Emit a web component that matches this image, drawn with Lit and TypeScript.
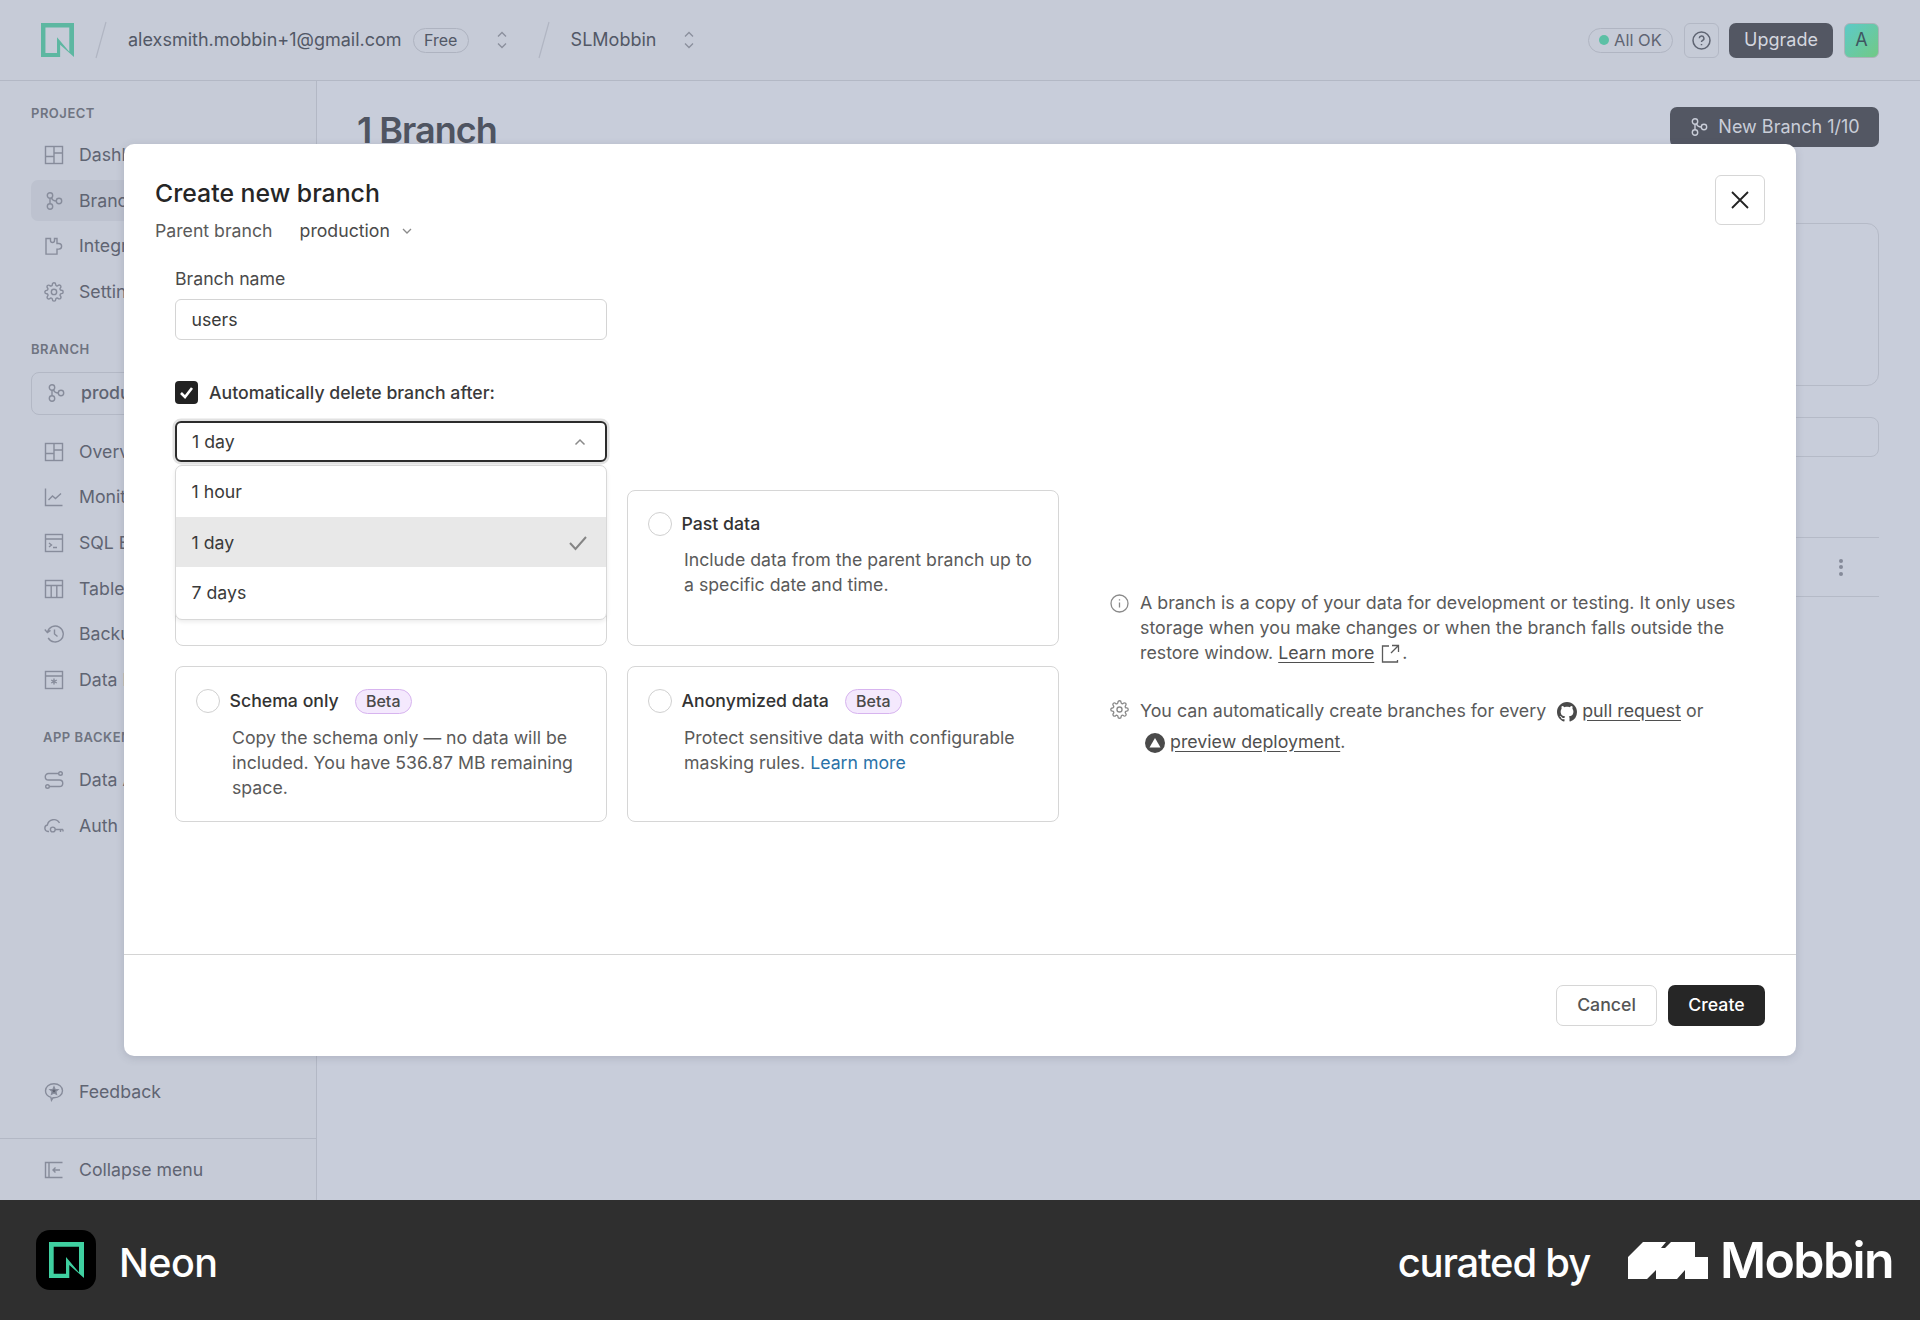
import { css, html, LitElement, svg } from "lit";
import { customElement } from "lit/decorators.js";

const GEAR = "M19.4 15a1.65 1.65 0 0 0 .33 1.82l.06.06a2 2 0 0 1 0 2.83 2 2 0 0 1-2.83 0l-.06-.06a1.65 1.65 0 0 0-1.82-.33 1.65 1.65 0 0 0-1 1.51V21a2 2 0 0 1-2 2 2 2 0 0 1-2-2v-.09A1.65 1.65 0 0 0 9 19.4a1.65 1.65 0 0 0-1.82.33l-.06.06a2 2 0 0 1-2.83 0 2 2 0 0 1 0-2.83l.06-.06a1.65 1.65 0 0 0 .33-1.82 1.65 1.65 0 0 0-1.51-1H3a2 2 0 0 1-2-2 2 2 0 0 1 2-2h.09A1.65 1.65 0 0 0 4.6 9a1.65 1.65 0 0 0-.33-1.82l-.06-.06a2 2 0 0 1 0-2.83 2 2 0 0 1 2.83 0l.06.06a1.65 1.65 0 0 0 1.82.33H9a1.65 1.65 0 0 0 1-1.51V3a2 2 0 0 1 2-2 2 2 0 0 1 2 2v.09a1.65 1.65 0 0 0 1 1.51 1.65 1.65 0 0 0 1.82-.33l.06-.06a2 2 0 0 1 2.83 0 2 2 0 0 1 0 2.83l-.06.06a1.65 1.65 0 0 0-.33 1.82V9a1.65 1.65 0 0 0 1.51 1H21a2 2 0 0 1 2 2 2 2 0 0 1-2 2h-.09a1.65 1.65 0 0 0-1.51 1z";
const GITHUB = "M8 0C3.58 0 0 3.58 0 8c0 3.54 2.29 6.53 5.47 7.59.4.07.55-.17.55-.38 0-.19-.01-.82-.01-1.49-2.01.37-2.53-.49-2.69-.94-.09-.23-.48-.94-.82-1.13-.28-.15-.68-.52-.01-.53.63-.01 1.08.58 1.23.82.72 1.21 1.87.87 2.33.66.07-.52.28-.87.51-1.07-1.78-.2-3.64-.89-3.64-3.95 0-.87.31-1.59.82-2.15-.08-.2-.36-1.02.08-2.12 0 0 .67-.21 2.2.82.64-.18 1.32-.27 2-.27.68 0 1.36.09 2 .27 1.53-1.04 2.2-.82 2.2-.82.44 1.1.16 1.92.08 2.12.51.56.82 1.27.82 2.15 0 3.07-1.87 3.75-3.65 3.95.29.25.54.73.54 1.48 0 1.07-.01 1.93-.01 2.2 0 .21.15.46.55.38A8.013 8.013 0 0016 8c0-4.42-3.58-8-8-8z";

const icons: Record<string, unknown> = {
  dashboard: svg`<rect x="1.5" y="1.5" width="17" height="17"/><path d="M10 1.5v17M1.5 11.5H10M10 8h8.5"/>`,
  branch: svg`<circle cx="6" cy="4.5" r="2.7"/><circle cx="6" cy="15.5" r="2.7"/><circle cx="15" cy="10" r="2.7"/><path d="M6 7.2v5.6M7.5 7c.8 2.2 2.6 3 4.8 3"/>`,
  puzzle: svg`<path d="M2 2.5h4.5v2a2 2 0 0 0 4 0v-2H13v5h1.8a2.8 2.8 0 0 1 0 5.6H13v5H2z"/>`,
  gear: svg`<g transform="scale(.8333)" stroke-width="1.7"><path d="${GEAR}"/><circle cx="12" cy="12" r="3.2"/></g>`,
  chart: svg`<path d="M1.5 1.5v17h17M4.5 13l4-4 3 2.5 5.5-5"/>`,
  sql: svg`<rect x="1.5" y="1.5" width="17" height="17"/><path d="M1.5 6h17M5 10l2.5 2L5 14M9 14.5h4"/>`,
  tables: svg`<rect x="1.5" y="1.5" width="17" height="17"/><path d="M1.5 6.5h17M7.2 6.5v12M12.8 6.5v12"/>`,
  backup: svg`<path d="M3.5 8a8 8 0 1 1 .7 5.8M.8 5.5 3.4 8.6l3.1-2.2M10.5 5.5V10l3 2.5"/>`,
  mask: svg`<rect x="1.5" y="1.5" width="17" height="17"/><path d="M1.5 6h17M10 8.5v6M7.2 10l5.6 3M12.8 10l-5.6 3"/>`,
  flow: svg`<circle cx="16.5" cy="3.5" r="1.8"/><circle cx="3.5" cy="16.5" r="1.8"/><path d="M14.7 3.5H4.5a3 3 0 0 0 0 6.5h11a3 3 0 0 1 0 6.5H5.3"/>`,
  auth: svg`<path d="M5 15.5H4A3.3 3.3 0 0 1 3.4 9 6.5 6.5 0 0 1 15.5 7"/><circle cx="8.8" cy="13.5" r="2.4"/><path d="M11.2 13.5H19M16.5 13.5v2.5M19 13.5v2"/>`,
  feedback: svg`<path d="M10 1.8c4.8 0 8.5 3 8.5 7s-3.7 7-8.5 7H9l-1.5 2.4-.6-2.9C3.6 14.3 1.5 11.8 1.5 8.8c0-4 3.7-7 8.5-7z"/><path d="m10 5 1.1 2.5 2.7.2-2 1.8.6 2.7-2.4-1.4-2.4 1.4.6-2.7-2-1.8 2.7-.2z" fill="currentColor"/>`,
  collapse: svg`<path d="M18.5 2.5H1.5v15h17M5 2.5v15M16 10H9M11.5 7.5 9 10l2.5 2.5"/>`,
};

const icon = (name: string, size = 20) => html`<svg class="ico" width=${size} height=${size} viewBox="0 0 20 20">${icons[name]}</svg>`;

const updown = html`<svg class="updown" width="12" height="20" viewBox="0 0 12 20"><path d="M2 6.5 6 2.5l4 4M2 13.5l4 4 4-4"/></svg>`;
const slash = html`<svg class="slash" width="12" height="38" viewBox="0 0 12 38"><path d="M11 1 1 37"/></svg>`;

const neonMark = svg`<path fill-rule="evenodd" d="M0 0H35V36L20.3 23V36H0ZM4.7 4.7V31.7H17V15L30 30.5V4.7Z"/>`;

@customElement("app-root")
export class AppRoot extends LitElement {
  static override styles = css`
    :host {
      display: block;
      width: 1920px;
      font-family: Inter, "Liberation Sans", sans-serif;
      font-size: 17.7px;
      line-height: 24px;
    }
    * { box-sizing: border-box; }
    a { color: inherit; }

    .screen { position: relative; height: 1200px; background: #c8cdda; display: flex; flex-direction: column; overflow: hidden; }

    /* top bar */
    .topbar { height: 81px; flex: none; background: #c6cbd7; border-bottom: 1px solid #b3b8c5; display: flex; align-items: center; padding: 0 41px; color: #525866; font-size: 18px; }
    .topbar .logo { width: 33px; height: 34px; color: #5db7a1; margin-right: 21px; flex: none; }
    .slash { flex: none; }
    .slash path { fill: none; stroke: #b0b5c2; stroke-width: 1.2; }
    .updown { flex: none; }
    .updown path { fill: none; stroke: #8a8f9c; stroke-width: 1.3; }
    .email { margin-left: 21px; }
    .free { margin-left: 11px; height: 25px; width: 56px; border: 1px solid #aeb3c0; border-radius: 13px; font-size: 16px; display: flex; align-items: center; justify-content: center; }
    .acct-switch { margin: 0 30px 0 27px; display: flex; }
    .org { margin-left: 21px; }
    .org-switch { margin-left: 27px; display: flex; }
    .topbar-right { margin-left: auto; display: flex; align-items: center; }
    .status { height: 25px; width: 85px; border: 1px solid #b0b5c2; border-radius: 13px; font-size: 16.5px; display: flex; align-items: center; padding-left: 10px; gap: 5px; color: #5f6472; white-space: nowrap; }
    .status i { width: 10px; height: 10px; border-radius: 50%; background: #5cc0a5; flex: none; }
    .help { margin-left: 11px; width: 35px; height: 35px; border: 1px solid #b3b8c5; border-radius: 6px; display: flex; align-items: center; justify-content: center; color: #5f6472; }
    .upgrade { margin-left: 10px; width: 104px; height: 35px; border-radius: 7px; background: #535763; color: #d3d6df; display: flex; align-items: center; justify-content: center; }
    .avatar { margin-left: 11px; width: 35px; height: 35px; border-radius: 6px; background: linear-gradient(135deg, #5ccac8, #72c985); border: 1px solid #a9b3b8; color: #3f5560; display: flex; align-items: center; justify-content: center; }

    .body { flex: 1; display: flex; min-height: 0; }

    /* sidebar */
    .side { width: 317px; flex: none; background: #c6cbd7; border-right: 1px solid #b3b8c5; padding: 24px 0 9.5px; display: flex; flex-direction: column; color: #5f6472; }
    .sec { font-size: 13px; line-height: 16px; font-weight: 600; letter-spacing: .5px; color: #6f7481; margin-left: 31px; }
    .sec.b { margin-top: 28.5px; }
    .sec.c { margin-top: 28.5px; margin-left: 43px; }
    .nav { display: flex; flex-direction: column; gap: 4.6px; margin: 13.5px 0 0 31px; width: 255px; }
    .nav.o { margin-top: 16.5px; }
    .nav.d { margin-top: 15px; }
    .item { height: 41px; border-radius: 7px; display: flex; align-items: center; padding-left: 13px; gap: 15px; white-space: nowrap; }
    .item.on { background: #bdc2cf; }
    .ico { flex: none; fill: none; stroke: #878c9b; stroke-width: 1.4; }
    .prod { margin: 15px 0 0 31px; width: 255px; height: 43px; border: 1px solid #b3b8c5; border-radius: 8px; display: flex; align-items: center; padding-left: 14px; gap: 15px; font-weight: 500; }
    .side-end { margin-top: auto; }
    .side-end .nav { margin-top: 0; }
    .side-end .rule { height: 1px; background: #b3b8c5; margin: 25.5px 0 11px; }

    /* page behind the dialog */
    .main { flex: 1; padding: 26px 41px 0 40px; }
    .main-head { display: flex; justify-content: space-between; align-items: flex-start; }
    .main-head h1 { margin: 1px 0 0; font-size: 36px; line-height: 44px; font-weight: 600; letter-spacing: -1px; color: #4f5461; }
    .new { width: 209px; height: 40px; border-radius: 7px; background: #535763; color: #c9cdd8; display: flex; align-items: center; justify-content: center; gap: 9px; white-space: nowrap; font-size: 18px; }
    .new .ico { stroke: #c9cdd8; }
    .ghost { border: 1px solid #b5bac7; border-radius: 12px; }
    .ghost.a { height: 163px; margin-top: 71px; }
    .ghost.s { height: 40px; margin-top: 31px; border-radius: 8px; }
    .rowline { height: 60px; margin-top: 80px; border-top: 1px solid #b5bac7; border-bottom: 1px solid #b5bac7; display: flex; align-items: center; justify-content: flex-end; padding-right: 36px; }
    .dots { display: flex; flex-direction: column; gap: 2.5px; }
    .dots i { width: 4px; height: 4px; border-radius: 50%; background: #858a99; }

    /* dialog */
    .modal { position: absolute; left: 124px; top: 144px; width: 1672px; height: 912px; background: #fff; border-radius: 10px; box-shadow: 0 2px 8px rgba(60, 66, 90, .18); display: flex; flex-direction: column; color: #5a5a5a; }
    .m-main { flex: 1; padding: 31px 31px 0; }
    .m-head { display: flex; justify-content: space-between; align-items: flex-start; }
    .m-head h2 { margin: 2px 0 10px; font-size: 24.8px; line-height: 32px; font-weight: 500; color: #262626; }
    .parent { display: flex; align-items: center; color: #5a5a5a; }
    .parent b { font-weight: 400; margin-left: 27px; color: #4a4a4a; }
    .parent svg { margin-left: 11px; fill: none; stroke: #8a8a8a; stroke-width: 1.3; }
    .close { width: 50px; height: 50px; border: 1.5px solid #d6d6d6; border-radius: 6px; display: flex; align-items: center; justify-content: center; }
    .close path { stroke: #222; stroke-width: 1.8; fill: none; }
    .form { padding: 25px 0 0 20px; margin-top: -33px; }
    .lbl { color: #4a4a4a; margin-top: 32px; }
    .field { margin-top: 8px; width: 431.5px; height: 41px; border: 1.5px solid #d4d4d4; border-radius: 6px; display: flex; align-items: center; padding-left: 15.5px; color: #3a3a3a; }
    .check { margin-top: 41px; display: flex; align-items: center; gap: 11px; height: 23px; font-weight: 500; color: #3a3a3a; }
    .box { width: 23px; height: 23px; background: #222; border-radius: 4px; display: flex; align-items: center; justify-content: center; }
    .box path { fill: none; stroke: #fff; stroke-width: 2.6; }
    .select-wrap { position: relative; width: 431.5px; margin-top: 17px; }
    .select { height: 41px; border: 2px solid #2c2c2c; border-radius: 6px; box-shadow: 0 0 0 2.5px #e2e2e2; display: flex; align-items: center; justify-content: space-between; padding: 0 19px 0 15px; color: #3a3a3a; }
    .select path { fill: none; stroke: #8a8a8a; stroke-width: 1.5; }
    .menu { position: absolute; z-index: 2; left: 0; right: 0; top: 44px; height: 155px; background: #fff; border: 1.5px solid #d8d8d8; border-radius: 7px; box-shadow: 0 2px 4px rgba(0, 0, 0, .08); overflow: hidden; }
    .opt { height: 50.5px; display: flex; align-items: center; justify-content: space-between; padding: 1.5px 18px 0 15.5px; color: #3a3a3a; }
    .opt.sel { background: #e8e8e8; }
    .opt path { fill: none; stroke: #858585; stroke-width: 2; }
    .lower { display: flex; margin-top: 27.5px; }
    .cards { display: grid; grid-template-columns: 431.5px 431.5px; grid-template-rows: 156px 156px; gap: 20px 20.5px; flex: none; }
    .card { border: 1.5px solid #d6d6d6; border-radius: 8px; padding: 22px 20px 0 19.5px; }
    .card.first-row { padding-top: 21px; }
    .card-top { display: flex; align-items: center; gap: 10px; min-height: 25px; font-weight: 500; color: #333; white-space: nowrap; }
    .radio { width: 24px; height: 24px; border: 1.5px solid #d0d0d0; border-radius: 50%; flex: none; }
    .beta { margin-left: 6px; height: 25px; width: 57px; border: 1px solid #d7b4ef; border-radius: 13px; background: #f4e9fd; color: #4a4a4a; font-size: 16px; font-weight: 500; display: flex; align-items: center; justify-content: center; }
    .card p { margin: 11px 0 0 36.5px; line-height: 25px; color: #5a5a5a; }
    .card.first-row p { margin-top: 10px; }
    .card p a { color: #2a72a8; text-decoration: none; }

    .info { margin: 100px 0 0 51.5px; width: 634px; font-size: 17.8px; }
    .note { display: flex; gap: 11px; line-height: 25.2px; color: #5a5a5a; }
    .note + .note { margin-top: 31px; line-height: 30.5px; }
    .note > svg { flex: none; margin-top: 4px; fill: none; stroke: #8a8a8a; stroke-width: 1.3; }
    .note a { text-decoration: underline; color: #4f4f4f; text-underline-offset: 3px; }
    .ext { vertical-align: -4px; fill: none; stroke: #5a5a5a; stroke-width: 1.3; margin: 0 2px; }
    .brand { vertical-align: -5px; margin: 0 5px 0 6px; fill: #4a4a4a; }
    .brand.first { margin-left: 5px; }
    .note p { margin: 0; }

    .m-foot { height: 102px; flex: none; border-top: 1.5px solid #d4d4d4; padding: 29.5px 31px 0 0; display: flex; justify-content: flex-end; gap: 11px; }
    .btn { height: 41px; border-radius: 7px; display: flex; align-items: center; justify-content: center; font-weight: 500; }
    .cancel { width: 101px; border: 1.5px solid #d6d6d6; color: #555; }
    .create { width: 97px; background: #262626; color: #fff; }

    /* credit strip */
    .credit { height: 120px; background: #2f2f2f; color: #fff; display: flex; align-items: center; padding: 0 27px 0 36px; }
    .tile { width: 60px; height: 60px; background: #000; border-radius: 14px; display: flex; align-items: center; justify-content: center; color: #3fd0a0; }
    .neon { margin: 5px 0 0 23px; font-size: 39.5px; line-height: 48px; font-weight: 500; letter-spacing: -.6px; }
    .curated { margin: 5px 0 0 auto; font-size: 40px; line-height: 48px; font-weight: 500; letter-spacing: -1.2px; }
    .mark { margin-left: 38px; flex: none; }
    .mobbin { margin-left: 12px; font-size: 50px; line-height: 56px; font-weight: 600; letter-spacing: -1.6px; }
  `;

  private _nav(items: [string, string, boolean?][], cls = "") {
    return html`<div class="nav ${cls}">
      ${items.map(
        ([ic, label, on]) => html`<div class="item ${on ? "on" : ""}">${icon(ic)}<span>${label}</span></div>`
      )}
    </div>`;
  }

  private _sidebar() {
    return html`<aside class="side">
      <div class="sec">PROJECT</div>
      ${this._nav([
        ["dashboard", "Dashboard"],
        ["branch", "Branches", true],
        ["puzzle", "Integrations"],
        ["gear", "Settings"],
      ])}
      <div class="sec b">BRANCH</div>
      <div class="prod">${icon("branch")}<span>production</span></div>
      ${this._nav(
        [
          ["dashboard", "Overview"],
          ["chart", "Monitoring"],
          ["sql", "SQL Editor"],
          ["tables", "Tables"],
          ["backup", "Backup"],
          ["mask", "Data Masking"],
        ],
        "o"
      )}
      <div class="sec c">APP BACKEND</div>
      ${this._nav(
        [
          ["flow", "Data API"],
          ["auth", "Auth"],
        ],
        "d"
      )}
      <div class="side-end">
        ${this._nav([["feedback", "Feedback"]])}
        <div class="rule"></div>
        ${this._nav([["collapse", "Collapse menu"]])}
      </div>
    </aside>`;
  }

  private _dialog() {
    return html`<div class="modal">
      <div class="m-main">
        <div class="m-head">
          <div>
            <h2>Create new branch</h2>
            <div class="parent">
              Parent branch <b>production</b>
              <svg width="12" height="12" viewBox="0 0 12 12"><path d="m2 4 4 4 4-4"/></svg>
            </div>
          </div>
          <div class="close"><svg width="20" height="20" viewBox="0 0 20 20"><path d="m2 2 16 16M18 2 2 18"/></svg></div>
        </div>
        <div class="form">
          <div class="lbl">Branch name</div>
          <div class="field">users</div>
          <div class="check">
            <span class="box"><svg width="17" height="17" viewBox="0 0 17 17"><path d="m3 9 4 4 7-9"/></svg></span>
            Automatically delete branch after:
          </div>
          <div class="select-wrap">
            <div class="select">1 day <svg width="12" height="8" viewBox="0 0 12 8"><path d="m1.5 6.5 4.5-4.5 4.5 4.5"/></svg></div>
            <div class="menu">
              <div class="opt">1 hour</div>
              <div class="opt sel">1 day <svg width="20" height="16" viewBox="0 0 20 16"><path d="m2 8 5.5 6L18 2"/></svg></div>
              <div class="opt">7 days</div>
            </div>
          </div>
          <div class="lower">
            <div class="cards">
              <div class="card first-row"></div>
              <div class="card first-row">
                <div class="card-top"><span class="radio"></span>Past data</div>
                <p>Include data from the parent branch up to a specific date and time.</p>
              </div>
              <div class="card">
                <div class="card-top"><span class="radio"></span>Schema only <span class="beta">Beta</span></div>
                <p>Copy the schema only — no data will be included. You have 536.87 MB remaining space.</p>
              </div>
              <div class="card">
                <div class="card-top"><span class="radio"></span>Anonymized data <span class="beta">Beta</span></div>
                <p>Protect sensitive data with configurable masking rules. <a href="#">Learn more</a></p>
              </div>
            </div>
            <div class="info">
              <div class="note">
                <svg width="19" height="19" viewBox="0 0 19 19"><circle cx="9.5" cy="9.5" r="8.5"/><path d="M9.5 8.5v5M9.5 5.2v1.3"/></svg>
                <p>A branch is a copy of your data for development or testing. It only uses storage when you make changes or when the branch falls outside the restore window. <a href="#">Learn more</a>
                  <svg class="ext" width="19" height="19" viewBox="0 0 19 19"><path d="M8 2H1.5v16h15v-2M11 1.5h6.5V8M17.5 1.5 10 9"/></svg>.</p>
              </div>
              <div class="note">
                <svg width="19" height="19" viewBox="0 0 24 24" style="stroke-width:1.7"><path d=${GEAR}/><circle cx="12" cy="12" r="3.2"/></svg>
                <p>You can automatically create branches for every
                  <svg class="brand" width="20" height="20" viewBox="0 0 16 16"><path d=${GITHUB}/></svg><a href="#">pull request</a> or<br />
                  <svg class="brand first" width="20" height="20" viewBox="0 0 20 20"><circle cx="10" cy="10" r="10"/><path d="M10 5l5.5 9.5h-11z" fill="#fff"/></svg><a href="#">preview deployment</a>.</p>
              </div>
            </div>
          </div>
        </div>
      </div>
      <div class="m-foot">
        <div class="btn cancel">Cancel</div>
        <div class="btn create">Create</div>
      </div>
    </div>`;
  }

  override render() {
    return html`
      <div class="screen">
        <header class="topbar">
          <svg class="logo" viewBox="0 0 35 36" fill="currentColor">${neonMark}</svg>
          ${slash}
          <span class="email">alexsmith.mobbin+1@gmail.com</span>
          <span class="free">Free</span>
          <span class="acct-switch">${updown}</span>
          ${slash}
          <span class="org">SLMobbin</span>
          <span class="org-switch">${updown}</span>
          <div class="topbar-right">
            <div class="status"><i></i>All OK</div>
            <div class="help">
              <svg width="19" height="19" viewBox="0 0 19 19" fill="none" stroke="currentColor" stroke-width="1.5"><circle cx="9.5" cy="9.5" r="8.5"/><path d="M7.3 7.3a2.3 2.3 0 1 1 3.3 2.1c-.7.4-1.1.8-1.1 1.6M9.5 13v1.2"/></svg>
            </div>
            <div class="upgrade">Upgrade</div>
            <div class="avatar">A</div>
          </div>
        </header>
        <div class="body">
          ${this._sidebar()}
          <main class="main">
            <div class="main-head">
              <h1>1 Branch</h1>
              <div class="new">${icon("branch")}New Branch 1/10</div>
            </div>
            <div class="ghost a"></div>
            <div class="ghost s"></div>
            <div class="rowline"><div class="dots"><i></i><i></i><i></i></div></div>
          </main>
        </div>
        ${this._dialog()}
      </div>
      <footer class="credit">
        <div class="tile"><svg width="35" height="36" viewBox="0 0 35 36" fill="currentColor">${neonMark}</svg></div>
        <span class="neon">Neon</span>
        <span class="curated">curated by</span>
        <svg class="mark" width="80" height="37" viewBox="0 0 80 37" fill="#fff"><path d="M0 37V15L15 0H38L33 6H37L43 0H67V15H80V37H57V28L49 37H28V28L19 37Z"/></svg>
        <span class="mobbin">Mobbin</span>
      </footer>
    `;
  }
}
